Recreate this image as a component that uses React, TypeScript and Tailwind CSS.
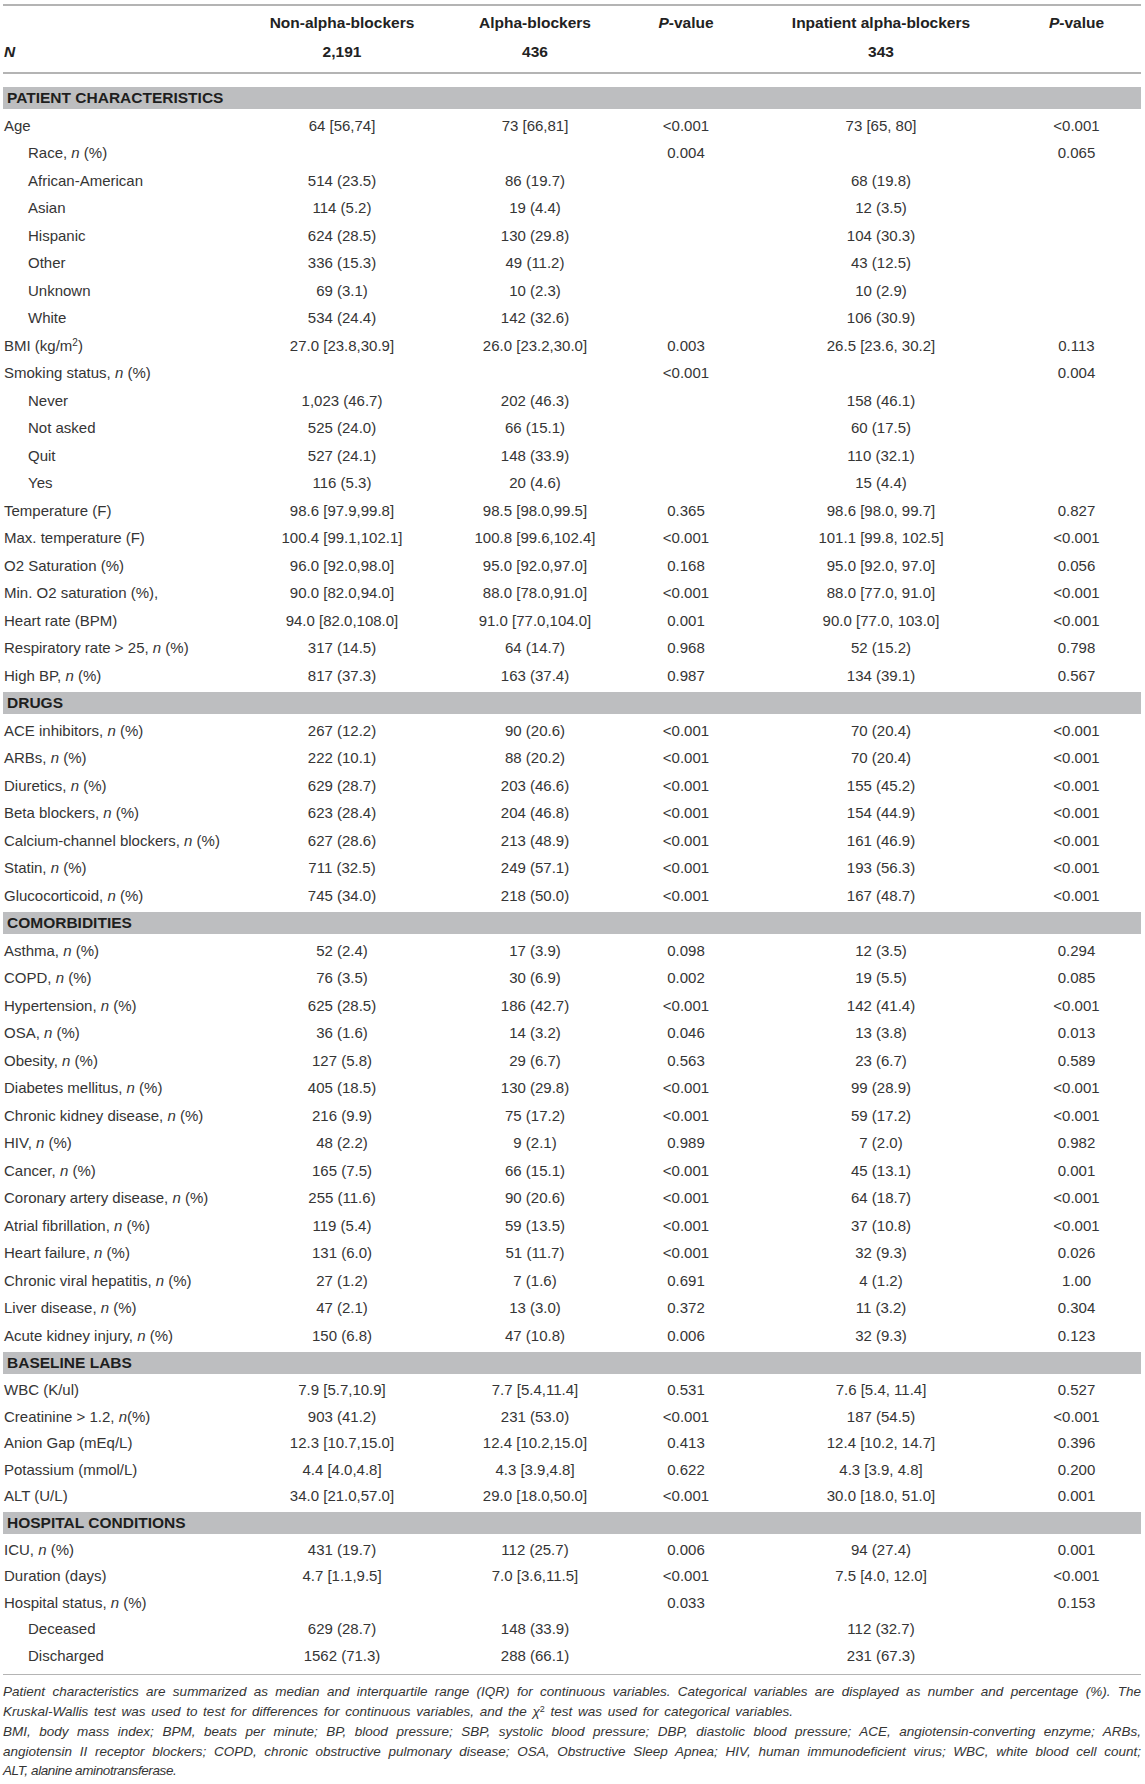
import React from "react";

type Row =
  | { kind: "section"; title: string; tall?: boolean }
  | { kind: "row"; label: string; indent?: boolean; v: [string, string, string, string, string]; short?: boolean };

const S = (title: string, short = false): Row => ({ kind: "section", title, tall: !short });
const R = (label: string, v: [string, string, string, string, string], indent = false, short = false): Row => ({
  kind: "row",
  label,
  v,
  indent,
  short,
});

const rows: Row[] = [
  S("PATIENT CHARACTERISTICS"),
  R("Age", ["64 [56,74]", "73 [66,81]", "<0.001", "73 [65, 80]", "<0.001"]),
  R("Race, *n* (%)", ["", "", "0.004", "", "0.065"], true),
  R("African-American", ["514 (23.5)", "86 (19.7)", "", "68 (19.8)", ""], true),
  R("Asian", ["114 (5.2)", "19 (4.4)", "", "12 (3.5)", ""], true),
  R("Hispanic", ["624 (28.5)", "130 (29.8)", "", "104 (30.3)", ""], true),
  R("Other", ["336 (15.3)", "49 (11.2)", "", "43 (12.5)", ""], true),
  R("Unknown", ["69 (3.1)", "10 (2.3)", "", "10 (2.9)", ""], true),
  R("White", ["534 (24.4)", "142 (32.6)", "", "106 (30.9)", ""], true),
  R("BMI (kg/m^2^)", ["27.0 [23.8,30.9]", "26.0 [23.2,30.0]", "0.003", "26.5 [23.6, 30.2]", "0.113"]),
  R("Smoking status, *n* (%)", ["", "", "<0.001", "", "0.004"]),
  R("Never", ["1,023 (46.7)", "202 (46.3)", "", "158 (46.1)", ""], true),
  R("Not asked", ["525 (24.0)", "66 (15.1)", "", "60 (17.5)", ""], true),
  R("Quit", ["527 (24.1)", "148 (33.9)", "", "110 (32.1)", ""], true),
  R("Yes", ["116 (5.3)", "20 (4.6)", "", "15 (4.4)", ""], true),
  R("Temperature (F)", ["98.6 [97.9,99.8]", "98.5 [98.0,99.5]", "0.365", "98.6 [98.0, 99.7]", "0.827"]),
  R("Max. temperature (F)", ["100.4 [99.1,102.1]", "100.8 [99.6,102.4]", "<0.001", "101.1 [99.8, 102.5]", "<0.001"]),
  R("O2 Saturation (%)", ["96.0 [92.0,98.0]", "95.0 [92.0,97.0]", "0.168", "95.0 [92.0, 97.0]", "0.056"]),
  R("Min. O2 saturation (%),", ["90.0 [82.0,94.0]", "88.0 [78.0,91.0]", "<0.001", "88.0 [77.0, 91.0]", "<0.001"]),
  R("Heart rate (BPM)", ["94.0 [82.0,108.0]", "91.0 [77.0,104.0]", "0.001", "90.0 [77.0, 103.0]", "<0.001"]),
  R("Respiratory rate > 25, *n* (%)", ["317 (14.5)", "64 (14.7)", "0.968", "52 (15.2)", "0.798"]),
  R("High BP, *n* (%)", ["817 (37.3)", "163 (37.4)", "0.987", "134 (39.1)", "0.567"]),
  S("DRUGS"),
  R("ACE inhibitors, *n* (%)", ["267 (12.2)", "90 (20.6)", "<0.001", "70 (20.4)", "<0.001"]),
  R("ARBs, *n* (%)", ["222 (10.1)", "88 (20.2)", "<0.001", "70 (20.4)", "<0.001"]),
  R("Diuretics, *n* (%)", ["629 (28.7)", "203 (46.6)", "<0.001", "155 (45.2)", "<0.001"]),
  R("Beta blockers, *n* (%)", ["623 (28.4)", "204 (46.8)", "<0.001", "154 (44.9)", "<0.001"]),
  R("Calcium-channel blockers, *n* (%)", ["627 (28.6)", "213 (48.9)", "<0.001", "161 (46.9)", "<0.001"]),
  R("Statin, *n* (%)", ["711 (32.5)", "249 (57.1)", "<0.001", "193 (56.3)", "<0.001"]),
  R("Glucocorticoid, *n* (%)", ["745 (34.0)", "218 (50.0)", "<0.001", "167 (48.7)", "<0.001"]),
  S("COMORBIDITIES"),
  R("Asthma, *n* (%)", ["52 (2.4)", "17 (3.9)", "0.098", "12 (3.5)", "0.294"]),
  R("COPD, *n* (%)", ["76 (3.5)", "30 (6.9)", "0.002", "19 (5.5)", "0.085"]),
  R("Hypertension, *n* (%)", ["625 (28.5)", "186 (42.7)", "<0.001", "142 (41.4)", "<0.001"]),
  R("OSA, *n* (%)", ["36 (1.6)", "14 (3.2)", "0.046", "13 (3.8)", "0.013"]),
  R("Obesity, *n* (%)", ["127 (5.8)", "29 (6.7)", "0.563", "23 (6.7)", "0.589"]),
  R("Diabetes mellitus, *n* (%)", ["405 (18.5)", "130 (29.8)", "<0.001", "99 (28.9)", "<0.001"]),
  R("Chronic kidney disease, *n* (%)", ["216 (9.9)", "75 (17.2)", "<0.001", "59 (17.2)", "<0.001"]),
  R("HIV, *n* (%)", ["48 (2.2)", "9 (2.1)", "0.989", "7 (2.0)", "0.982"]),
  R("Cancer, *n* (%)", ["165 (7.5)", "66 (15.1)", "<0.001", "45 (13.1)", "0.001"]),
  R("Coronary artery disease, *n* (%)", ["255 (11.6)", "90 (20.6)", "<0.001", "64 (18.7)", "<0.001"]),
  R("Atrial fibrillation, *n* (%)", ["119 (5.4)", "59 (13.5)", "<0.001", "37 (10.8)", "<0.001"]),
  R("Heart failure, *n* (%)", ["131 (6.0)", "51 (11.7)", "<0.001", "32 (9.3)", "0.026"]),
  R("Chronic viral hepatitis, *n* (%)", ["27 (1.2)", "7 (1.6)", "0.691", "4 (1.2)", "1.00"]),
  R("Liver disease, *n* (%)", ["47 (2.1)", "13 (3.0)", "0.372", "11 (3.2)", "0.304"]),
  R("Acute kidney injury, *n* (%)", ["150 (6.8)", "47 (10.8)", "0.006", "32 (9.3)", "0.123"]),
  S("BASELINE LABS"),
  R("WBC (K/ul)", ["7.9 [5.7,10.9]", "7.7 [5.4,11.4]", "0.531", "7.6 [5.4, 11.4]", "0.527"], false, true),
  R("Creatinine > 1.2, *n*(%)", ["903 (41.2)", "231 (53.0)", "<0.001", "187 (54.5)", "<0.001"], false, true),
  R("Anion Gap (mEq/L)", ["12.3 [10.7,15.0]", "12.4 [10.2,15.0]", "0.413", "12.4 [10.2, 14.7]", "0.396"], false, true),
  R("Potassium (mmol/L)", ["4.4 [4.0,4.8]", "4.3 [3.9,4.8]", "0.622", "4.3 [3.9, 4.8]", "0.200"], false, true),
  R("ALT (U/L)", ["34.0 [21.0,57.0]", "29.0 [18.0,50.0]", "<0.001", "30.0 [18.0, 51.0]", "0.001"], false, true),
  S("HOSPITAL CONDITIONS", true),
  R("ICU, *n* (%)", ["431 (19.7)", "112 (25.7)", "0.006", "94 (27.4)", "0.001"], false, true),
  R("Duration (days)", ["4.7 [1.1,9.5]", "7.0 [3.6,11.5]", "<0.001", "7.5 [4.0, 12.0]", "<0.001"], false, true),
  R("Hospital status, *n* (%)", ["", "", "0.033", "", "0.153"], false, true),
  R("Deceased", ["629 (28.7)", "148 (33.9)", "", "112 (32.7)", ""], true, true),
  R("Discharged", ["1562 (71.3)", "288 (66.1)", "", "231 (67.3)", ""], true, true),
];

function Label({ text }: { text: string }) {
  const parts = text.split(/(\*n\*|\^2\^)/);
  return (
    <>
      {parts.map((p, i) =>
        p === "*n*" ? (
          <i key={i}>n</i>
        ) : p === "^2^" ? (
          <sup key={i} className="text-[10px] leading-none">
            2
          </sup>
        ) : (
          <React.Fragment key={i}>{p}</React.Fragment>
        )
      )}
    </>
  );
}

const grid = "grid grid-cols-[233px_212px_174px_128px_262px_129px]";

export default function App() {
  return (
    <div className="w-[1145px] bg-white font-['Liberation_Sans',Arial,sans-serif] text-[#353535]">
      <div className="ml-[3px] w-[1138px] pt-[4px]">
        <div className="h-[2px] bg-[#b4b4b4]" />
        <div className={`${grid} h-[34px] items-center text-[15.5px] font-bold text-[#222]`}>
          <div />
          <div className="text-center">Non-alpha-blockers</div>
          <div className="text-center">Alpha-blockers</div>
          <div className="text-center">
            <i>P</i>-value
          </div>
          <div className="text-center">Inpatient alpha-blockers</div>
          <div className="text-center">
            <i>P</i>-value
          </div>
        </div>
        <div className={`${grid} h-[32px] items-start text-[15.5px] font-bold leading-[24px] text-[#222]`}>
          <div className="pl-[1px] italic">N</div>
          <div className="text-center">2,191</div>
          <div className="text-center">436</div>
          <div />
          <div className="text-center">343</div>
          <div />
        </div>
        <div className="h-[2px] bg-[#b4b4b4]" />
        <div className="h-[9.75px]" />
        {rows.map((r, i) =>
          r.kind === "section" ? (
            <div key={i} className={`flex items-center ${r.tall ? "h-[27.5px]" : "h-[26.6px]"}`}>
              <div className="flex h-[22px] w-full items-center bg-[#bdbec0] pl-[4px] text-[15.5px] font-bold text-[#1e1e1e]">
                {r.title}
              </div>
            </div>
          ) : (
            <div
              key={i}
              className={`${grid} items-center text-[15px] leading-none ${r.short ? "h-[26.6px]" : "h-[27.5px]"}`}
            >
              <div className={`whitespace-nowrap ${r.indent ? "pl-[25px]" : "pl-[1px]"}`}>
                <Label text={r.label} />
              </div>
              {r.v.map((v, j) => (
                <div key={j} className="whitespace-nowrap text-center">
                  {v}
                </div>
              ))}
            </div>
          )
        )}
        <div className="h-[5px]" />
        <div className="h-[1.5px] bg-[#b4b4b4]" />
        <div className="pt-[7px] text-[13.5px] italic leading-[19.75px] text-[#353535]">
          <div className="whitespace-nowrap text-justify [text-align-last:justify]">
            Patient characteristics are summarized as median and interquartile range (IQR) for continuous variables. Categorical variables are displayed as number and percentage (%). The
          </div>
          <div className="w-[790px] whitespace-nowrap text-justify [text-align-last:justify]">
            Kruskal-Wallis test was used to test for differences for continuous variables, and the χ
            <sup className="text-[9px] not-italic">2</sup> test was used for categorical variables.
          </div>
          <div className="whitespace-nowrap text-justify [text-align-last:justify]">
            BMI, body mass index; BPM, beats per minute; BP, blood pressure; SBP, systolic blood pressure; DBP, diastolic blood pressure; ACE, angiotensin-converting enzyme; ARBs,
          </div>
          <div className="whitespace-nowrap text-justify [text-align-last:justify]">
            angiotensin II receptor blockers; COPD, chronic obstructive pulmonary disease; OSA, Obstructive Sleep Apnea; HIV, human immunodeficient virus; WBC, white blood cell count;
          </div>
          <div className="whitespace-nowrap tracking-[-0.4px]">ALT, alanine aminotransferase.</div>
        </div>
      </div>
    </div>
  );
}
